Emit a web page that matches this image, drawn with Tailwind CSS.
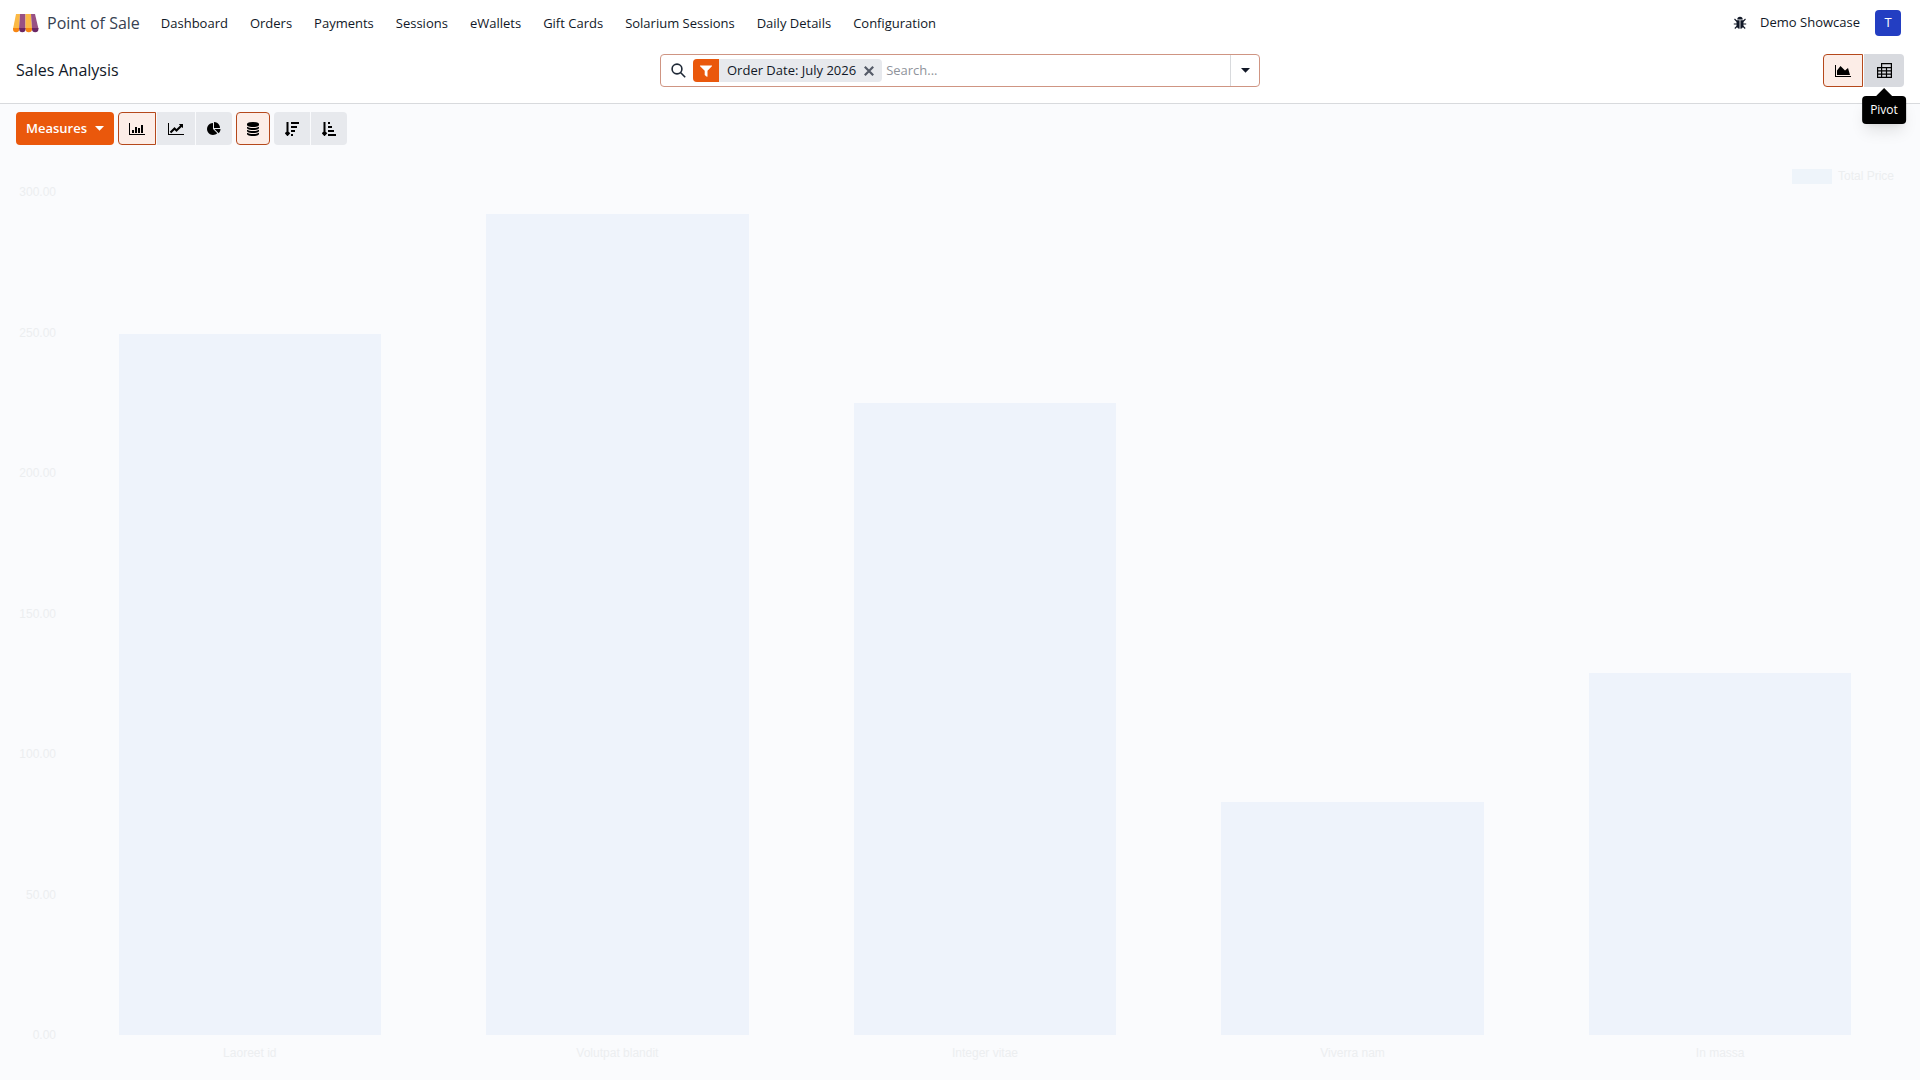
<!DOCTYPE html>
<html lang="en">
  <head>
    <meta charset="UTF-8" />
    <meta name="viewport" content="width=device-width, initial-scale=1.0" />
    <title>Sales Analysis</title>
    <script src="https://cdn.jsdelivr.net/npm/@tailwindcss/browser@4"></script>
  </head>
  <body class="flex h-screen flex-col bg-[#fafbfd] font-['Open_Sans','Noto_Sans',sans-serif] text-[13px] text-[#111827]">
    <header class="border-b border-[#d8dadd] bg-white">
      <nav class="flex h-[46px] items-center pl-3 pr-[19px]">
        <a href="#" class="flex items-center gap-2 text-[#374151]">
          <svg class="h-5 w-[27px]" viewBox="0 0 27 20">
            <path fill="#fbb945" d="M4 1h4l-1 15H1z" />
            <path fill="#985184" d="M8 1h5.500v15H7z" />
            <path fill="#fbb945" d="M13.500 1H19l1 15h-6.500z" />
            <path fill="#985184" d="M19 1h4l3.500 15H20z" />
            <path fill="#f78613" d="M1 15h6.200v1.200a3.100 3 0 0 1-6.200 0zM13.500 15H20v1.200a3.200 3 0 0 1-6.500 0z" />
            <path fill="#6b2764" d="M7.200 15h6.300v1.200a3.100 3 0 0 1-6.300 0zM20 15h6.400v1.200a3.200 3 0 0 1-6.400 0z" />
          </svg>
          <span class="text-base">Point of Sale</span>
        </a>
        <div class="ml-[21px] flex items-center gap-[22px] pt-px">
          <a href="#">Dashboard</a>
          <a href="#">Orders</a>
          <a href="#">Payments</a>
          <a href="#">Sessions</a>
          <a href="#">eWallets</a>
          <a href="#">Gift Cards</a>
          <a href="#">Solarium Sessions</a>
          <a href="#">Daily Details</a>
          <a href="#">Configuration</a>
        </div>
        <div class="ml-auto flex items-center">
          <button aria-label="Debug" class="mr-[13px]">
            <svg class="h-[14px] w-[14px]" viewBox="0 0 14 14">
              <path fill="currentColor" d="M4.300 3.500a2.700 2.700 0 0 1 5.400 0zM3.500 4.300h3.100v8.500C4.600 12.700 3.500 11 3.500 9zM7.400 4.300h3.100V9c0 2-1.100 3.700-3.100 3.800z" />
              <path fill="none" stroke="currentColor" stroke-width="1.100" d="M1.500 3l2.500 2.500M12.500 3L10 5.500M.8 8h3M13.200 8h-3M1.800 12.500L4.300 10M12.200 12.500L9.700 10" />
            </svg>
          </button>
          <button class="mr-[15px]">Demo Showcase</button>
          <button class="h-[26px] w-[26px] rounded bg-[#233ec2] text-white">T</button>
        </div>
      </nav>
      <div class="grid h-[57px] grid-cols-[1fr_600px_1fr] items-start px-4 pt-2">
        <h1 class="text-base leading-[33px]">Sales Analysis</h1>
        <div class="flex h-[33px] rounded border border-[#cf9583]">
          <div class="flex flex-1 items-center">
            <svg class="ml-[10px] h-[15px] w-[15px]" viewBox="0 0 15 15" fill="none" stroke="#1f2937" stroke-width="1.600">
              <circle cx="6" cy="6" r="4.900" />
              <path d="M9.500 9.500l4.700 4.700" />
            </svg>
            <div class="ml-[7px] flex h-[23px] items-center overflow-hidden rounded bg-[#e7e9ed]">
              <span class="flex h-full w-[26px] items-center justify-center bg-[#ea580c]">
                <svg class="h-3 w-3" viewBox="0 0 12 12"><path fill="#fff" d="M.3.500h11.400c.4 0 .4.500.2.700L7.500 5.700v5.600c0 .5-.4.600-.7.400L4.700 9.900V5.700L.1 1.200C-.1.900 0 .5.3.500z" /></svg>
              </span>
              <span class="pl-2">Order Date: July 2026</span>
              <button aria-label="Remove" class="px-2">
                <svg class="h-[10px] w-[10px]" viewBox="0 0 10 10"><path stroke="#555b68" stroke-width="2.200" d="M.8.800l8.400 8.400M9.200.800L.8 9.200" /></svg>
              </button>
            </div>
            <input type="text" aria-label="Search" placeholder="Search..." class="ml-1 min-w-0 flex-1 outline-none placeholder:text-[#8f939b]" />
          </div>
          <button aria-label="Toggle search panel" class="flex w-[29px] items-center justify-center border-l border-[#d8dadd]">
            <svg class="h-[5px] w-[9px]" viewBox="0 0 9 5"><path fill="currentColor" d="M0 0h9L4.500 4.800z" /></svg>
          </button>
        </div>
        <div class="flex justify-self-end gap-px">
          <button aria-label="Graph" class="flex h-[33px] w-10 items-center justify-center rounded-l border border-[#b5481b] bg-[#fcede7] text-black">
            <svg class="h-[14px] w-4" viewBox="0 0 2048 1792"><path fill="currentColor" d="M2048 1536v128h-2048v-1536h128v1408h1920zm-384-1024l256 896h-1664v-576l448-576 576 576z" /></svg>
          </button>
          <div class="relative">
            <button aria-label="Pivot" aria-describedby="pivot-tip" class="flex h-[33px] w-10 items-center justify-center rounded-r bg-[#d8dadf] text-black">
              <svg class="h-[15px] w-[15px]" viewBox="0 0 15 15" fill="none" stroke="currentColor" stroke-width="1.200">
                <path d="M.6 4.600h13.800v9.800H.6zM4.600 14.400V.6h9.800v4M.6 7.800h13.800M.6 11.100h13.800M9.500 4.600v9.800" />
              </svg>
            </button>
            <div id="pivot-tip" role="tooltip" class="absolute left-1/2 top-[34px] z-10 flex -translate-x-1/2 flex-col items-center">
              <svg class="h-2 w-4" viewBox="0 0 16 8"><path d="M8 0l8 8H0z" /></svg>
              <span class="rounded bg-black px-2 text-xs leading-7 text-white shadow-lg">Pivot</span>
            </div>
          </div>
        </div>
      </div>
    </header>

    <main class="flex min-h-0 flex-1 flex-col">
      <div class="flex gap-1 px-4 pt-2 text-black">
        <button class="flex h-[33px] items-center gap-2 rounded bg-[#ea580c] px-[10px] font-semibold text-white">
          Measures
          <svg class="h-[5px] w-[9px]" viewBox="0 0 9 5"><path fill="currentColor" d="M0 0h9L4.500 4.800z" /></svg>
        </button>
        <div class="flex gap-px">
          <button aria-label="Bar chart" class="flex h-[33px] w-[38px] items-center justify-center rounded-l border border-[#b5481b] bg-[#fcede7]">
            <svg class="h-[14px] w-4" viewBox="0 0 16 14"><path fill="currentColor" d="M0 1h1v11h15v1H0zM3 8h2v3H3zM6 5h2v6H6zM9 6h2v5H9zM12 3h2v8h-2z" /></svg>
          </button>
          <button aria-label="Line chart" class="flex h-[33px] w-[38px] items-center justify-center bg-[#e7e9ed]">
            <svg class="h-[14px] w-4" viewBox="0 0 2048 1792"><path fill="currentColor" d="M2048 1536v128h-2048v-1536h128v1408h1920zm-128-1248v435q0 21-19.500 29.500t-35.500-7.500l-121-121-633 633q-10 10-23 10t-23-10l-233-233-416 416-192-192 585-585q10-10 23-10t23 10l233 233 464-464-121-121q-16-16-7.500-35.500t29.500-19.500h435q14 0 23 9t9 23z" /></svg>
          </button>
          <button aria-label="Pie chart" class="flex h-[33px] w-9 items-center justify-center rounded-r bg-[#e7e9ed]">
            <svg class="h-[14px] w-[14px]" viewBox="0 0 1792 1792"><path fill="currentColor" d="M768 890l546 546q-106 108-247.500 168t-298.500 60q-209 0-385.500-103t-279.500-279.500-103-385.500 103-385.500 279.500-279.500 385.500-103v762zm187 6h773q0 157-60 298.500t-168 247.500zm709-128h-768v-768q209 0 385.500 103t279.500 279.500 103 385.500z" /></svg>
          </button>
        </div>
        <button aria-label="Stacked" class="flex h-[33px] w-[34px] items-center justify-center rounded border border-[#b5481b] bg-[#fcede7]">
          <svg class="h-[14px] w-3" viewBox="0 0 1536 1792"><path fill="currentColor" d="M768 768q237 0 443-43t325-127v170q0 69-103 128t-280 93.500-385 34.500-385-34.500-280-93.500-103-128v-170q119 84 325 127t443 43zm0 768q237 0 443-43t325-127v170q0 69-103 128t-280 93.500-385 34.500-385-34.500-280-93.500-103-128v-170q119 84 325 127t443 43zm0-384q237 0 443-43t325-127v170q0 69-103 128t-280 93.500-385 34.500-385-34.500-280-93.500-103-128v-170q119 84 325 127t443 43zm0-1152q208 0 385 34.500t280 93.500 103 128v128q0 69-103 128t-280 93.500-385 34.500-385-34.500-280-93.500-103-128v-128q0-69 103-128t280-93.500 385-34.500z" /></svg>
        </button>
        <div class="flex gap-px">
          <button aria-label="Descending" class="flex h-[33px] w-9 items-center justify-center rounded-l bg-[#e7e9ed]">
            <svg class="h-[14px] w-[14px]" viewBox="0 0 14 14" fill="none" stroke="currentColor" stroke-width="2">
              <path d="M2.500 0v12M.5 10.500l2 2.300 2-2.300M6 1h8M6 5h6M6 9h4M6 13h2" />
            </svg>
          </button>
          <button aria-label="Ascending" class="flex h-[33px] w-9 items-center justify-center rounded-r bg-[#e7e9ed]">
            <svg class="h-[14px] w-[14px]" viewBox="0 0 14 14" fill="none" stroke="currentColor" stroke-width="2">
              <path d="M2.500 0v12M.5 10.500l2 2.300 2-2.300M6 1h2M6 5h4M6 9h6M6 13h8" />
            </svg>
          </button>
        </div>
      </div>

      <section class="flex min-h-0 flex-1 flex-col px-4 pb-[19px] pt-[23px] font-['Liberation_Sans',sans-serif] text-xs leading-4 text-[#eceef0]">
        <div class="flex h-4 items-center justify-end gap-[6px] pr-[10px]">
          <span class="h-[15px] w-10 bg-[#eef4fa]"></span>
          <span>Total Price</span>
        </div>
        <div class="flex min-h-0 flex-1">
          <div id="axis" class="flex w-10 flex-col justify-between text-right"></div>
          <div id="bars" class="my-2 ml-[10px] flex flex-1 items-end"></div>
        </div>
        <div id="labels" class="ml-[50px] mt-[2px] flex"></div>
      </section>
    </main>

    <script>
      const max = 300;
      const sales = [
        { name: "Laoreet id", total: 249.5 },
        { name: "Volutpat blandit", total: 292 },
        { name: "Integer vitae", total: 225 },
        { name: "Viverra nam", total: 83 },
        { name: "In massa", total: 129 },
      ];
      const axis = document.getElementById("axis");
      const bars = document.getElementById("bars");
      const labels = document.getElementById("labels");

      for (let v = max; v >= 0; v -= 50) {
        axis.innerHTML += `<span>${v.toFixed(2)}</span>`;
      }

      sales.forEach((item) => {
        bars.innerHTML += `
          <div class="flex h-full flex-1 items-end justify-center">
            <div class="w-5/7 bg-[#eef3fb]" style="height: ${(item.total / max) * 100}%"></div>
          </div>`;
        labels.innerHTML += `<span class="flex-1 text-center">${item.name}</span>`;
      });
    </script>
  </body>
</html>
